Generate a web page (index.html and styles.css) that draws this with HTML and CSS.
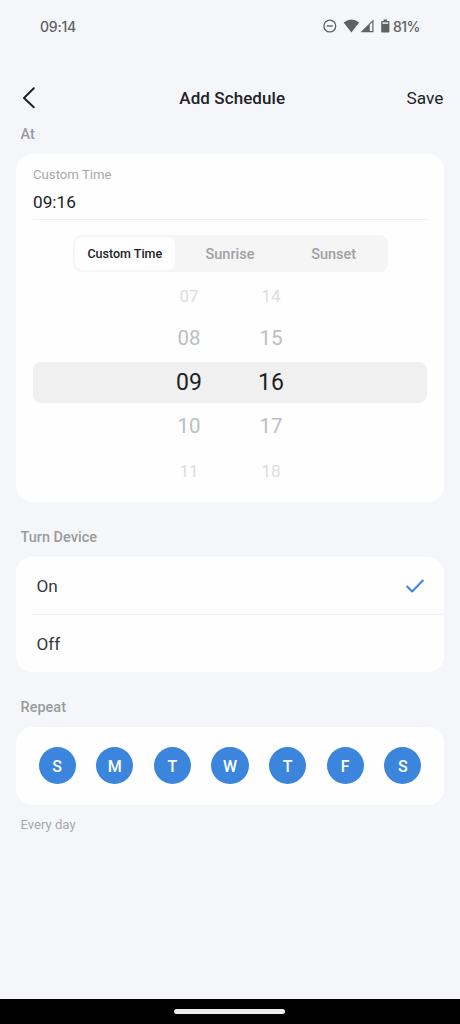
FILE: index.html
```html
<!DOCTYPE html>
<html lang="en">
<head>
<meta charset="utf-8">
<title>Add Schedule</title>
<link rel="stylesheet" href="styles.css">
</head>
<body>
<div class="screen">
  <div class="status">
    <span class="clock">09:14</span>
    <svg class="status-icons" width="67" height="18" viewBox="0 0 67 18">
      <circle cx="6.800" cy="9" r="5.900" fill="none" stroke="#606163" stroke-width="1.300"/>
      <path d="M3.800 9h6" stroke="#606163" stroke-width="1.400"/>
      <path d="M20.600 5.400Q28.400-.3 36.200 5.400L28.400 15.500Z" fill="#606163"/>
      <path d="M37.500 15.300L50.500 2.500V15.300Z" fill="#606163"/>
      <path d="M46.800 7.800L49.300 5.300V14.100H46.800Z" fill="#f5f6fa"/>
      <path d="M60.600 2.500h3.400v1.400h1.600q.8 0 .8.800v10q0 .8-.8.800h-6.600q-.8 0-.8-.8v-10q0-.8.8-.8h1.600z" fill="#606163"/>
      <path d="M59.500 5.300h5.600v1.500h-5.600z" fill="#f5f6fa"/>
    </svg>
    <span class="battery">81%</span>
  </div>
  <header class="bar">
    <svg width="14" height="22" viewBox="0 0 14 22" fill="none" stroke="#202226" stroke-width="2" stroke-linecap="round" stroke-linejoin="round"><path d="M11.800 1.300L2 11L11.800 20.300"/></svg>
    <h1 class="title">Add Schedule</h1>
    <span class="save">Save</span>
  </header>
  <h2 class="section at">At</h2>
  <section class="card time-card">
    <div class="field">
      <div class="field-label">Custom Time</div>
      <div class="field-value">09:16</div>
    </div>
    <div class="tabs">
      <div class="tab active">Custom Time</div>
      <div class="tab">Sunrise</div>
      <div class="tab">Sunset</div>
    </div>
    <div class="picker">
      <div class="row far"><span>07</span><span>14</span></div>
      <div class="row near upper"><span>08</span><span>15</span></div>
      <div class="row selected"><span>09</span><span>16</span></div>
      <div class="row near lower"><span>10</span><span>17</span></div>
      <div class="row far"><span>11</span><span>18</span></div>
    </div>
  </section>
  <h2 class="section device">Turn Device</h2>
  <section class="card">
    <div class="option first"><span>On</span>
      <svg width="18" height="14" viewBox="0 0 18 14" fill="none" stroke="#3b86dc" stroke-width="2" stroke-linecap="round" stroke-linejoin="round"><path d="M1.200 7.500L6.200 12.500L16.800 1.500"/></svg>
    </div>
    <div class="option"><span>Off</span></div>
  </section>
  <h2 class="section repeat">Repeat</h2>
  <section class="card days">
    <span class="day">S</span><span class="day">M</span><span class="day">T</span><span class="day">W</span><span class="day">T</span><span class="day">F</span><span class="day">S</span>
  </section>
  <p class="note">Every day</p>
  <footer class="nav"><div class="handle"></div></footer>
</div>
</body>
</html>
```
FILE: styles.css
```css
* { box-sizing: border-box; }
body { margin: 0; }
.screen {
  width: 460px;
  height: 1024px;
  display: flex;
  flex-direction: column;
  overflow: hidden;
  background: #f5f6fa;
  font-family: Roboto, sans-serif;
  color: #202226;
}
.status {
  display: flex;
  align-items: center;
  height: 36px;
  margin-top: 8px;
  padding: 0 40px;
  font-family: Inter, Roboto, sans-serif;
  font-size: 14px;
  font-weight: 500;
  color: #606163;
}
.clock { margin-right: auto; letter-spacing: -.2px; }
.battery { width: 27px; letter-spacing: -.5px; }
.status-icons { margin-right: 3px; }
.bar {
  display: grid;
  grid-template-columns: 1fr auto 1fr;
  align-items: center;
  height: 40px;
  margin-top: 34px;
  padding: 0 16.500px 0 22px;
}
.title {
  margin: 0 5px 0 0;
  font-size: 17px;
  font-weight: 500;
  letter-spacing: .08px;
}
.bar .title { transform: translateX(2px); }
.save { justify-self: end; font-size: 17.250px; }
.section {
  margin: 0 0 0 20.500px;
  font-size: 14.500px;
  line-height: 18px;
  font-weight: 500;
  color: #9a9b9d;
}
.at { margin-top: 8px; }
.device, .repeat { margin-top: 27px; }
.section + .card { margin-top: 10px; }
.card {
  margin: 0 16px;
  border-radius: 16px;
  background: #fefefe;
}
.time-card { height: 348px; padding: 11px 17px 0; }
.section.at + .card { margin-top: 10px; }
.field { height: 55px; border-bottom: 1px solid #f1f1f2; }
.field-label { font-size: 13.200px; line-height: 20px; color: #a8a9ab; }
.field-value { margin-top: 7px; font-size: 17.200px; line-height: 20px; }
.tabs {
  display: grid;
  grid-template-columns: repeat(3, 1fr);
  width: 315px;
  height: 37px;
  margin: 15px auto 0;
  padding: 2px;
  border-radius: 8px;
  background: #f5f5f5;
}
.tab {
  display: flex;
  align-items: center;
  justify-content: center;
  padding-top: 1px;
  font-size: 14.500px;
  font-weight: 500;
  color: #a0a1a4;
}
.tab.active {
  margin-right: 3px;
  padding: 0;
  border-radius: 7px;
  background: #fefefe;
  font-size: 12.500px;
  color: #202226;
}
.picker { display: flex; flex-direction: column; margin-top: 1px; }
.row {
  display: grid;
  grid-template-columns: 82px 82px;
  justify-content: center;
  align-items: center;
  text-align: center;
  height: 45px;
}
.far { font-size: 17px; color: #dcdde0; }
.near { height: 44px; font-size: 20.500px; color: #bcbfc3; }
.upper { padding-bottom: 4px; }
.lower { padding-top: 2px; }
.lower + .far { padding-top: 2px; }
.selected { height: 41px; border-radius: 8px; background: #f0f0f0; font-size: 23px; }
.option {
  display: flex;
  align-items: center;
  justify-content: space-between;
  height: 57px;
  margin-left: 16px;
  padding: 1px 20.500px 0 4.500px;
  font-size: 17.200px;
  color: #35383c;
}
.option.first { height: 58px; border-bottom: 1px solid #ededef; }
.days {
  display: flex;
  align-items: center;
  justify-content: space-between;
  height: 78px;
  padding: 0 22.500px 1px;
}
.day {
  display: flex;
  align-items: center;
  justify-content: center;
  width: 37.300px;
  height: 37.300px;
  padding-top: 2px;
  border-radius: 50%;
  background: #3b86dc;
  font-size: 16px;
  font-weight: 500;
  color: #fefefe;
}
.note { margin: 10px 0 0 20.500px; font-size: 13.100px; line-height: 20px; color: #a8a9ab; }
.nav {
  display: flex;
  justify-content: center;
  height: 25px;
  margin-top: auto;
  padding: 10px 1px 0 0;
  background: #000;
}
.handle { width: 111px; height: 5px; border-radius: 3px; background: #ededed; }
```
